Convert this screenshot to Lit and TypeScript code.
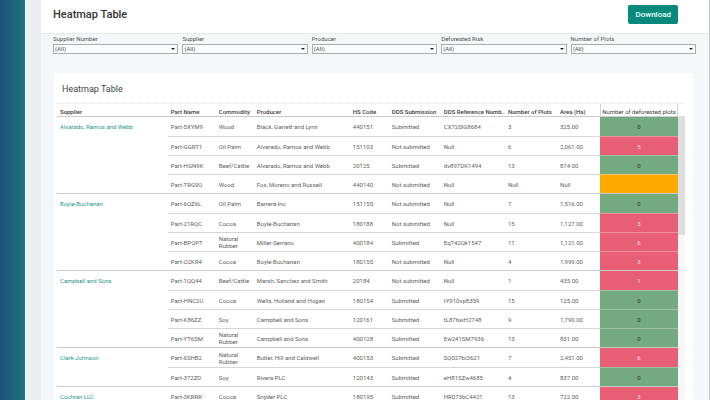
import { LitElement, html, css } from "lit";
import { customElement, state } from "lit/decorators.js";
import { classMap } from "lit/directives/class-map.js";

interface Part {
  name: string;
  commodity: string;
  producer: string;
  hs: string;
  dds: string;
  ref: string;
  plots: string;
  area: string;
  deforested: number | null;
}

interface Supplier {
  name: string;
  parts: Part[];
}

const part = (
  name: string,
  commodity: string,
  producer: string,
  hs: string,
  submitted: boolean,
  ref: string,
  plots: string,
  area: string,
  deforested: number | null
): Part => ({
  name,
  commodity,
  producer,
  hs,
  dds: submitted ? "Submitted" : "Not submitted",
  ref,
  plots,
  area,
  deforested,
});

const SUPPLIERS: Supplier[] = [
  {
    name: "Alvarado, Ramos and Webb",
    parts: [
      part("Part-5XYM9", "Wood", "Black, Garrett and Lynn", "440151", true, "CX720IG8684", "3", "325.00", 0),
      part("Part-GGRT1", "Oil Palm", "Alvarado, Ramos and Webb", "151103", false, "Null", "6", "2,061.00", 5),
      part("Part-HGN9K", "Beef/Cattle", "Alvarado, Ramos and Webb", "20125", true, "dv897DK1494", "13", "874.00", 0),
      part("Part-TRG9O", "Wood", "Fox, Moreno and Russell", "440140", false, "Null", "Null", "Null", null),
    ],
  },
  {
    name: "Boyle-Buchanan",
    parts: [
      part("Part-6OZ6L", "Oil Palm", "Barrera Inc", "151155", false, "Null", "7", "1,516.00", 0),
      part("Part-21RQC", "Cocoa", "Boyle-Buchanan", "180188", false, "Null", "15", "1,127.00", 3),
      part("Part-BPOPT", "Natural Rubber", "Miller-Serrano", "400184", true, "Eq742Qk1547", "11", "1,121.00", 6),
      part("Part-O2KR4", "Cocoa", "Boyle-Buchanan", "180155", false, "Null", "4", "1,999.00", 3),
    ],
  },
  {
    name: "Campbell and Sons",
    parts: [
      part("Part-1QQ44", "Beef/Cattle", "Marsh, Sanchez and Smith", "20184", false, "Null", "1", "435.00", 1),
      part("Part-HNC2U", "Cocoa", "Wells, Holland and Hogan", "180154", true, "tY910vp8359", "15", "125.00", 0),
      part("Part-K86ZZ", "Soy", "Campbell and Sons", "120161", true, "tL876wH2748", "9", "1,790.00", 0),
      part("Part-YT6SM", "Natural Rubber", "Campbell and Sons", "400128", true, "Ew241SM7936", "13", "831.00", 0),
    ],
  },
  {
    name: "Clark-Johnson",
    parts: [
      part("Part-6SHB2", "Natural Rubber", "Butler, Hill and Caldwell", "400153", true, "SQ027bI3621", "7", "2,451.00", 6),
      part("Part-372ZD", "Soy", "Rivera PLC", "120143", true, "eH815Zw4685", "4", "837.00", 0),
    ],
  },
  {
    name: "Cochran LLC",
    parts: [
      part("Part-3KRRR", "Cocoa", "Snyder PLC", "180195", true, "HR073bC4421", "13", "722.00", 3),
    ],
  },
];

const FILTERS = ["Supplier Number", "Supplier", "Producer", "Deforested Risk", "Number of Plots"];

@customElement("filter-bar")
class FilterBar extends LitElement {
  static styles = css`
    :host {
      display: grid;
      grid-template-columns: repeat(5, 1fr);
      gap: 4px;
      font: 6px/8px Roboto, sans-serif;
      color: #505050;
    }
    .label {
      display: block;
      margin-bottom: 1px;
      white-space: nowrap;
    }
    .box {
      display: grid;
      align-items: center;
    }
    .select,
    .arrow {
      grid-area: 1 / 1;
    }
    .select {
      appearance: none;
      box-sizing: border-box;
      width: 100%;
      height: 10px;
      margin: 0;
      padding: 0 1px;
      border: 1px solid #a9abad;
      border-radius: 0;
      background: #fafbfc;
      font: inherit;
      color: #505050;
    }
    .arrow {
      justify-self: end;
      width: 4px;
      height: 2px;
      margin-right: 3px;
      fill: #222;
      pointer-events: none;
    }
  `;

  render() {
    return FILTERS.map(
      (name, i) => html`
        <div>
          <label class="label" for="filter-${i}">${name}</label>
          <div class="box">
            <select class="select" id="filter-${i}">
              <option>(All)</option>
            </select>
            <svg class="arrow" viewBox="0 0 4 2" aria-hidden="true"><path d="M0 0h4L2 2z" /></svg>
          </div>
        </div>
      `
    );
  }
}

@customElement("heatmap-table")
class HeatmapTable extends LitElement {
  static styles = css`
    :host {
      display: flex;
      min-height: 0;
      overflow: hidden;
      border-top: 1px dotted #e2e2e2;
      font: 6px/7px Roboto, sans-serif;
      color: #606060;
    }
    .table {
      flex: 1;
      align-self: flex-start;
      table-layout: fixed;
      border-collapse: separate;
      border-spacing: 0;
    }
    .c-part { width: 48px; }
    .c-commodity { width: 38px; }
    .c-producer { width: 96px; }
    .c-hs { width: 39px; }
    .c-dds { width: 52px; }
    .c-ref { width: 62px; }
    .c-plots { width: 52px; }
    .c-area { width: 43px; }
    .c-heat { width: 78px; }
    .head {
      box-sizing: border-box;
      height: 12px;
      padding: 2px 0 0 3px;
      overflow: hidden;
      text-align: left;
      text-overflow: ellipsis;
      white-space: nowrap;
      font-weight: 500;
      color: #3c3c3c;
    }
    .head.heat {
      padding: 2px 0 0;
      border-left: 1px solid #d4d4d4;
      border-right: 1px solid #d4d4d4;
      text-align: center;
      font-weight: 400;
    }
    .cell {
      box-sizing: border-box;
      height: 19px;
      padding: 0 0 0 3px;
      border-top: 1px solid #d6d6d6;
      text-align: left;
      font-weight: 400;
    }
    .first .cell {
      height: 20px;
      border-top-color: #cacaca;
    }
    .supplier {
      padding-top: 6px;
      vertical-align: top;
    }
    .link {
      color: #1d9a86;
      text-decoration: none;
    }
    .cell.heat {
      padding: 0;
      text-align: center;
    }
    .none {
      background: #74aa7f;
      border-top-color: #9cc3a4;
      color: #1f3a26;
    }
    .some {
      background: #e85f75;
      border-top-color: #ef929f;
      color: #fbdde1;
    }
    .unknown {
      background: #ffaa00;
      border-top-color: #f5c56a;
    }
    .track {
      width: 7px;
      margin-top: 12px;
      background: #f7f7f7;
    }
    .thumb {
      height: 42%;
      background: #dedede;
    }
  `;

  @state() private suppliers = SUPPLIERS;

  private row(supplier: Supplier, p: Part, i: number) {
    const heat = {
      cell: true,
      heat: true,
      none: p.deforested === 0,
      some: !!p.deforested,
      unknown: p.deforested === null,
    };
    return html`
      <tr class=${classMap({ first: i === 0 })}>
        ${i === 0
          ? html`<th class="cell supplier" scope="rowgroup" rowspan=${supplier.parts.length}>
              <a class="link" href="#">${supplier.name}</a>
            </th>`
          : null}
        <td class="cell">${p.name}</td>
        <td class="cell">${p.commodity}</td>
        <td class="cell">${p.producer}</td>
        <td class="cell">${p.hs}</td>
        <td class="cell">${p.dds}</td>
        <td class="cell">${p.ref}</td>
        <td class="cell">${p.plots}</td>
        <td class="cell">${p.area}</td>
        <td class=${classMap(heat)}>${p.deforested}</td>
      </tr>
    `;
  }

  render() {
    return html`
      <table class="table">
        <colgroup>
          <col />
          <col class="c-part" />
          <col class="c-commodity" />
          <col class="c-producer" />
          <col class="c-hs" />
          <col class="c-dds" />
          <col class="c-ref" />
          <col class="c-plots" />
          <col class="c-area" />
          <col class="c-heat" />
        </colgroup>
        <thead>
          <tr>
            <th class="head" scope="col">Supplier</th>
            <th class="head" scope="col">Part Name</th>
            <th class="head" scope="col">Commodity</th>
            <th class="head" scope="col">Producer</th>
            <th class="head" scope="col">HS Code</th>
            <th class="head" scope="col">DDS Submission</th>
            <th class="head" scope="col">DDS Reference Numb..</th>
            <th class="head" scope="col">Number of Plots</th>
            <th class="head" scope="col">Area (Ha)</th>
            <th class="head heat" scope="col">Number of deforested plots</th>
          </tr>
        </thead>
        ${this.suppliers.map((s) => html`<tbody>${s.parts.map((p, i) => this.row(s, p, i))}</tbody>`)}
      </table>
      <div class="track"><div class="thumb"></div></div>
    `;
  }
}

@customElement("app-root")
class AppRoot extends LitElement {
  static styles = css`
    :host {
      display: flex;
      height: 100vh;
      overflow: hidden;
      font-family: Roboto, sans-serif;
      background: #ecedf0;
    }
    .sidebar {
      flex: none;
      width: 25px;
      margin-right: 16px;
      background: linear-gradient(90deg, #22507a, #1b7482);
    }
    .page {
      flex: 1;
      min-width: 0;
      display: flex;
      flex-direction: column;
      border-right: 1px solid #c6c8ca;
      background: #f4f7fa;
    }
    .header {
      display: flex;
      align-items: center;
      justify-content: space-between;
      padding: 5px 31px 9px 12px;
      border-bottom: 1px solid #e6e8ea;
      background: #fff;
    }
    .title {
      margin: 0;
      font-size: 11px;
      line-height: 16px;
      font-weight: 500;
      color: #333;
    }
    .download {
      height: 19px;
      padding: 0 7px;
      border: 0;
      border-radius: 2px;
      background: #07897b;
      font: 500 8px/19px Roboto, sans-serif;
      color: #f2fffd;
    }
    .filters {
      margin: 1px 13px 19px 12px;
    }
    .card {
      flex: 1;
      min-height: 0;
      display: flex;
      flex-direction: column;
      margin: 0 16px 0 13px;
      padding: 0 8px 0 3px;
      background: #fff;
    }
    .subtitle {
      margin: 10px 5px 7px;
      font-size: 9px;
      line-height: 13px;
      font-weight: 400;
      color: #444;
    }
  `;

  render() {
    return html`
      <aside class="sidebar"></aside>
      <main class="page">
        <header class="header">
          <h1 class="title">Heatmap Table</h1>
          <button class="download" type="button">Download</button>
        </header>
        <filter-bar class="filters"></filter-bar>
        <section class="card">
          <h2 class="subtitle">Heatmap Table</h2>
          <heatmap-table></heatmap-table>
        </section>
      </main>
    `;
  }
}
